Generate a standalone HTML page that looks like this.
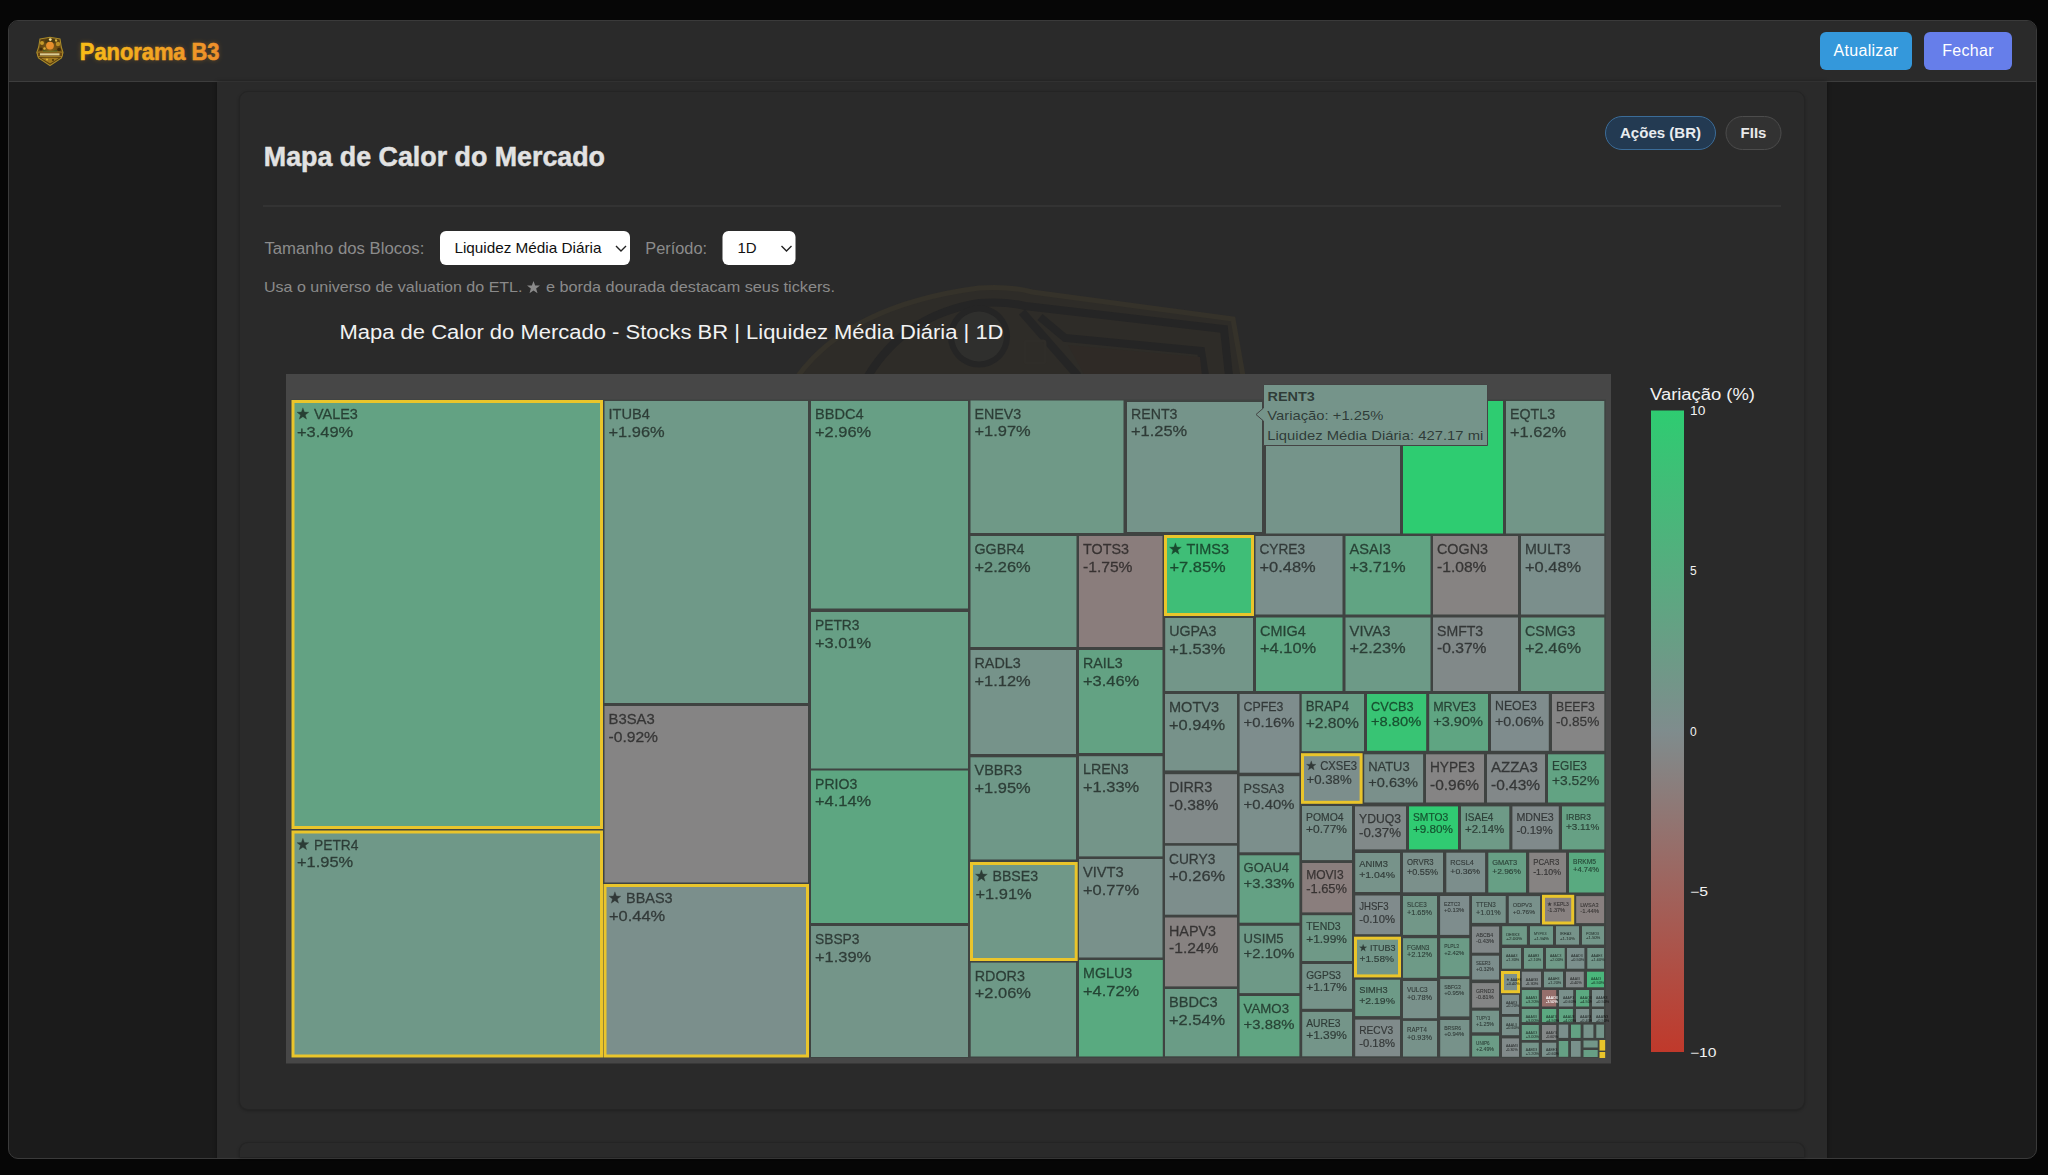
<!DOCTYPE html>
<html><head><meta charset="utf-8">
<style>
*{margin:0;padding:0;box-sizing:border-box}
html,body{width:2048px;height:1175px;overflow:hidden;background:#060606;font-family:"Liberation Sans",sans-serif}
.abs{position:absolute}
#win{position:absolute;left:8px;top:19.5px;width:2028.5px;height:1139px;border:1px solid #3a3a3a;border-radius:10px;overflow:hidden;background:#1b1b1b}
#hdr{position:absolute;left:0;top:0;right:0;height:61px;background:#2a2a2a;border-bottom:1px solid #3d3d3d}
#main{position:absolute;left:208px;top:61px;width:1610px;height:1100px;background:#2a2a2a;box-shadow:0 0 4px rgba(0,0,0,0.45)}
.card{position:absolute;background:#2a2a2a;border-radius:9px;border:1px solid #242424;box-shadow:0 1px 3px rgba(0,0,0,0.25)}
.btn{position:absolute;height:38px;border-radius:6px;color:#fff;font-size:16px;line-height:38px;text-align:center;letter-spacing:0.3px}
.pill{position:absolute;height:34px;border-radius:17px;font-weight:bold;font-size:15px;color:#e6e9ec;text-align:center;line-height:32px}
.sel{position:absolute;height:34px;background:#fff;border-radius:6px;border:1px solid #cfcfcf}
.lbl{position:absolute;color:#8b8b8b;font-size:16px;white-space:nowrap}
svg text{font-family:"Liberation Sans",sans-serif}
</style></head><body>
<div id="win">
 <div id="hdr"></div>
 <div id="main"></div>
</div>
<div class="card" style="left:238.5px;top:91px;width:1566px;height:1018.5px"></div>
<div class="card" style="left:238.5px;top:1142px;width:1566px;height:15px;border-radius:9px 9px 0 0;border-bottom:none"></div>
<svg class="abs" style="left:0;top:0" width="80" height="80" viewBox="0 0 80 80">
<defs><radialGradient id="lg1" cx="50" cy="50" r="14" gradientUnits="userSpaceOnUse"><stop offset="0" stop-color="#8c661a"/><stop offset="1" stop-color="#54390e"/></radialGradient></defs>
<path d="M40 39 L50 37.2 L60 39 L61.3 47 L63 52.5 L61.5 58 L50 65.5 L38.5 58 L36.8 52.5 L38.7 47 Z" fill="url(#lg1)" stroke="#a88a2a" stroke-width="1.1"/>
<circle cx="42" cy="43" r="2" fill="#c49a2a"/><circle cx="58" cy="44" r="2.2" fill="#b88c24"/><circle cx="44.5" cy="48.5" r="1.2" fill="#d4aa3a"/><circle cx="56" cy="40.5" r="1.2" fill="#d8b440"/><circle cx="39.5" cy="54" r="1.3" fill="#c9a030"/>
<circle cx="41" cy="49" r="1.6" fill="#3e2a0a"/><circle cx="59" cy="49.5" r="1.8" fill="#3e2a0a"/>
<ellipse cx="50" cy="41.2" rx="5.2" ry="2.6" fill="#4b3b12"/>
<circle cx="50" cy="45.6" r="3.9" fill="#e88f2c"/>
<circle cx="50.3" cy="39.6" r="1.4" fill="#f6e39a"/>
<path d="M43 50 Q50 52 57 50 L57 52 L43 52 Z" fill="#3f5a22" opacity="0.8"/>
<rect x="37.5" y="52" width="25" height="4.6" rx="1.2" fill="#6a4812" stroke="#c9a232" stroke-width="0.6"/>
<rect x="40" y="53.3" width="19.5" height="2.1" fill="#eadba2" opacity="0.9"/>
<path d="M41 58 L59 58 L50 63.5 Z" fill="#a27a1e"/>
<circle cx="47" cy="59.5" r="1" fill="#e0b840"/><circle cx="53" cy="60" r="0.9" fill="#3e2a0a"/>
</svg>
<svg class="abs" style="left:0;top:0" width="300" height="80">
 <defs>
  <linearGradient id="pg" x1="79" y1="0" x2="220" y2="0" gradientUnits="userSpaceOnUse"><stop offset="0" stop-color="#f7bd17"/><stop offset="1" stop-color="#ee8f2b"/></linearGradient>
  <filter id="glow" x="-20%" y="-50%" width="140%" height="200%"><feGaussianBlur stdDeviation="2.5"/></filter>
 </defs>
 <text x="79.8" y="59.9" font-size="23.5" font-weight="bold" fill="#e89a20" opacity="0.4" filter="url(#glow)" textLength="139.7" lengthAdjust="spacingAndGlyphs">Panorama B3</text>
 <text x="79.8" y="59.9" font-size="23.5" font-weight="bold" fill="url(#pg)" stroke="url(#pg)" stroke-width="0.6" textLength="139.7" lengthAdjust="spacingAndGlyphs">Panorama B3</text>
</svg>
<div class="btn" style="left:1820px;top:32px;width:92px;background:#3498db">Atualizar</div>
<div class="btn" style="left:1924px;top:32px;width:88px;background:#667eea">Fechar</div>

<svg class="abs" style="left:0;top:0" width="2048" height="1175">
 <text x="263.8" y="165.6" font-size="28" font-weight="bold" fill="#e2e2e2" stroke="#e2e2e2" stroke-width="0.5" textLength="341.2" lengthAdjust="spacingAndGlyphs">Mapa de Calor do Mercado</text>
 <rect x="1605.5" y="116.5" width="110" height="33" rx="16.5" fill="#233a52" stroke="#3b6c98" stroke-width="1"/>
 <text x="1660.5" y="138.2" font-size="15" font-weight="bold" fill="#e8ecef" text-anchor="middle" textLength="81" lengthAdjust="spacingAndGlyphs">Ações (BR)</text>
 <rect x="1726" y="116.5" width="55" height="33" rx="16.5" fill="#323232" stroke="#4c4c4c" stroke-width="1"/>
 <text x="1753.5" y="138.2" font-size="15" font-weight="bold" fill="#e8e8e8" text-anchor="middle">FIIs</text>
 <rect x="263" y="205.5" width="1518" height="1" fill="#3c3c3c"/>
 <text x="264.4" y="253.8" font-size="16" fill="#8c8c8c" textLength="160" lengthAdjust="spacingAndGlyphs">Tamanho dos Blocos:</text>
 <rect x="440" y="231" width="190" height="34" rx="6" fill="#ffffff"/>
 <text x="454.4" y="253.3" font-size="15" fill="#111" textLength="147" lengthAdjust="spacingAndGlyphs">Liquidez Média Diária</text>
 <path d="M616 246 L621 251 L626 246" fill="none" stroke="#222" stroke-width="1.4"/>
 <text x="645.3" y="253.8" font-size="16" fill="#8c8c8c" textLength="61.7" lengthAdjust="spacingAndGlyphs">Período:</text>
 <rect x="722.5" y="231" width="73" height="34" rx="6" fill="#ffffff"/>
 <text x="737.5" y="253.3" font-size="15" fill="#111">1D</text>
 <path d="M781.5 246 L786.5 251 L791.5 246" fill="none" stroke="#222" stroke-width="1.4"/>
 <text x="264" y="291.9" font-size="15" fill="#8a8a8a" textLength="258.5" lengthAdjust="spacingAndGlyphs">Usa o universo de valuation do ETL.</text>
 <path transform="translate(526.5,280.5)" d="M7.00,0.40 L8.65,4.93 L13.47,5.10 L9.66,8.07 L11.00,12.70 L7.00,10.00 L3.00,12.70 L4.34,8.07 L0.53,5.10 L5.35,4.93Z" fill="#8a8a8a"/>
 <text x="546" y="291.9" font-size="15" fill="#8a8a8a" textLength="289" lengthAdjust="spacingAndGlyphs">e borda dourada destacam seus tickers.</text>

 <!-- watermark -->
 <g>
  <path d="M798 376 Q 850 305 979 288 Q 1010 286 1032 292 L 1233 319 L 1243 376 Z" fill="#2e2c28"/>
  <path d="M798 376 Q 850 305 979 288 Q 1010 286 1032 292 L 1233 319 L 1243 376" fill="none" stroke="#35322a" stroke-width="5"/>
  <path d="M868 376 Q 905 315 979 303 Q 1005 301 1025 306 L 1224 329 L 1229 376" fill="none" stroke="#252525" stroke-width="8"/>
  <path d="M1040 317 L 1065 338 L 1201 351 L 1205 376" fill="none" stroke="#252525" stroke-width="8"/>
  <path d="M1022 312 L 1078 376" fill="none" stroke="#252525" stroke-width="8"/>
  <path d="M1068 345 L 1200 357 L 1202 376 L 1085 376 Z" fill="#2f2a26"/>
  <rect x="1025" y="341" width="20" height="22" rx="2" fill="none" stroke="#2f2d29" stroke-width="3"/>
  <circle cx="979" cy="336.5" r="31" fill="#252525"/>
  <circle cx="979" cy="336.5" r="25" fill="#2f2f2d"/>
 </g>

 <text x="339.5" y="339" font-size="20" fill="#f2f2f2" textLength="664" lengthAdjust="spacingAndGlyphs">Mapa de Calor do Mercado - Stocks BR | Liquidez Média Diária | 1D</text>

 <!-- treemap -->
 <rect x="286" y="374" width="1325" height="689.5" fill="#474747"/>
 <rect x="290.5" y="399.5" width="1315.5" height="658.5" fill="#3f4341"/>
 <rect x="291.5" y="400.0" width="311.5" height="429.0" fill="#eac52b"/>
<rect x="294.5" y="403.0" width="305.5" height="423.0" fill="#63a283"/>
<g fill="#000000" stroke="#000000" stroke-width="0.30" opacity="0.6" font-size="14.98">
<path d="M302.90,407.78 L304.43,411.98 L308.89,412.13 L305.37,414.88 L306.60,419.18 L302.90,416.68 L299.20,419.18 L300.43,414.88 L296.91,412.13 L301.37,411.98Z"/>
<text x="314.00" y="419.08" textLength="43.81" lengthAdjust="spacingAndGlyphs">VALE3</text>
<text x="297.00" y="436.56" textLength="56.20" lengthAdjust="spacingAndGlyphs">+3.49%</text>
</g>
<rect x="291.5" y="830.5" width="311.5" height="227.0" fill="#eac52b"/>
<rect x="294.5" y="833.5" width="305.5" height="221.0" fill="#6f9888"/>
<g fill="#000000" stroke="#000000" stroke-width="0.30" opacity="0.6" font-size="14.98">
<path d="M302.90,838.28 L304.43,842.48 L308.89,842.63 L305.37,845.38 L306.60,849.68 L302.90,847.18 L299.20,849.68 L300.43,845.38 L296.91,842.63 L301.37,842.48Z"/>
<text x="314.00" y="849.58" textLength="44.47" lengthAdjust="spacingAndGlyphs">PETR4</text>
<text x="297.00" y="867.06" textLength="56.20" lengthAdjust="spacingAndGlyphs">+1.95%</text>
</g>
<rect x="604.5" y="401.0" width="203.5" height="302.0" fill="#6f9988"/>
<g fill="#000000" stroke="#000000" stroke-width="0.30" opacity="0.6" font-size="14.98">
<text x="608.50" y="419.08" textLength="41.44" lengthAdjust="spacingAndGlyphs">ITUB4</text>
<text x="608.50" y="436.56" textLength="56.20" lengthAdjust="spacingAndGlyphs">+1.96%</text>
</g>
<rect x="604.5" y="706.0" width="203.5" height="176.5" fill="#858484"/>
<g fill="#000000" stroke="#000000" stroke-width="0.30" opacity="0.6" font-size="14.98">
<text x="608.50" y="724.08" textLength="46.16" lengthAdjust="spacingAndGlyphs">B3SA3</text>
<text x="608.50" y="741.56" textLength="49.52" lengthAdjust="spacingAndGlyphs">-0.92%</text>
</g>
<rect x="603.5" y="884.0" width="205.5" height="173.5" fill="#eac52b"/>
<rect x="606.5" y="887.0" width="199.5" height="167.5" fill="#7b8f8c"/>
<g fill="#000000" stroke="#000000" stroke-width="0.30" opacity="0.6" font-size="14.98">
<path d="M614.90,891.78 L616.43,895.98 L620.89,896.13 L617.37,898.88 L618.60,903.18 L614.90,900.68 L611.20,903.18 L612.43,898.88 L608.91,896.13 L613.37,895.98Z"/>
<text x="626.00" y="903.08" textLength="46.59" lengthAdjust="spacingAndGlyphs">BBAS3</text>
<text x="609.00" y="920.56" textLength="56.20" lengthAdjust="spacingAndGlyphs">+0.44%</text>
</g>
<rect x="811.0" y="401.0" width="157.0" height="207.5" fill="#679f85"/>
<g fill="#000000" stroke="#000000" stroke-width="0.30" opacity="0.6" font-size="14.98">
<text x="815.00" y="419.08" textLength="48.69" lengthAdjust="spacingAndGlyphs">BBDC4</text>
<text x="815.00" y="436.56" textLength="56.20" lengthAdjust="spacingAndGlyphs">+2.96%</text>
</g>
<rect x="811.0" y="612.0" width="157.0" height="156.5" fill="#679f85"/>
<g fill="#000000" stroke="#000000" stroke-width="0.30" opacity="0.6" font-size="14.98">
<text x="815.00" y="630.08" textLength="44.47" lengthAdjust="spacingAndGlyphs">PETR3</text>
<text x="815.00" y="647.56" textLength="56.20" lengthAdjust="spacingAndGlyphs">+3.01%</text>
</g>
<rect x="811.0" y="770.5" width="157.0" height="152.5" fill="#5da681"/>
<g fill="#000000" stroke="#000000" stroke-width="0.30" opacity="0.6" font-size="14.98">
<text x="815.00" y="788.58" textLength="42.22" lengthAdjust="spacingAndGlyphs">PRIO3</text>
<text x="815.00" y="806.06" textLength="56.20" lengthAdjust="spacingAndGlyphs">+4.14%</text>
</g>
<rect x="811.0" y="926.0" width="157.0" height="131.0" fill="#749589"/>
<g fill="#000000" stroke="#000000" stroke-width="0.30" opacity="0.6" font-size="14.98">
<text x="815.00" y="944.08" textLength="44.48" lengthAdjust="spacingAndGlyphs">SBSP3</text>
<text x="815.00" y="961.56" textLength="56.20" lengthAdjust="spacingAndGlyphs">+1.39%</text>
</g>
<rect x="970.5" y="400.5" width="153.0" height="132.5" fill="#6f9987"/>
<g fill="#000000" stroke="#000000" stroke-width="0.30" opacity="0.6" font-size="14.98">
<text x="974.50" y="418.58" textLength="46.64" lengthAdjust="spacingAndGlyphs">ENEV3</text>
<text x="974.50" y="436.06" textLength="56.20" lengthAdjust="spacingAndGlyphs">+1.97%</text>
</g>
<rect x="1127.0" y="402.0" width="135.0" height="130.0" fill="#75948a"/>
<g fill="#000000" stroke="#000000" stroke-width="0.30" opacity="0.6" font-size="14.98">
<text x="1131.00" y="418.88" textLength="46.50" lengthAdjust="spacingAndGlyphs">RENT3</text>
<text x="1131.00" y="436.36" textLength="56.20" lengthAdjust="spacingAndGlyphs">+1.25%</text>
</g>
<rect x="1266.0" y="401.0" width="134.0" height="132.5" fill="#75948a"/>
<rect x="1403.0" y="401.0" width="100.0" height="132.5" fill="#2ecc71"/>
<rect x="1506.0" y="401.0" width="98.3" height="132.5" fill="#729688"/>
<g fill="#000000" stroke="#000000" stroke-width="0.30" opacity="0.6" font-size="14.98">
<text x="1510.00" y="419.08" textLength="45.11" lengthAdjust="spacingAndGlyphs">EQTL3</text>
<text x="1510.00" y="436.56" textLength="56.20" lengthAdjust="spacingAndGlyphs">+1.62%</text>
</g>
<rect x="970.5" y="536.0" width="106.0" height="111.0" fill="#6d9a87"/>
<g fill="#000000" stroke="#000000" stroke-width="0.30" opacity="0.6" font-size="14.98">
<text x="974.50" y="554.08" textLength="49.94" lengthAdjust="spacingAndGlyphs">GGBR4</text>
<text x="974.50" y="571.56" textLength="56.20" lengthAdjust="spacingAndGlyphs">+2.26%</text>
</g>
<rect x="1079.0" y="536.0" width="83.5" height="111.0" fill="#8a7d7c"/>
<g fill="#000000" stroke="#000000" stroke-width="0.30" opacity="0.6" font-size="14.98">
<text x="1083.00" y="554.08" textLength="45.91" lengthAdjust="spacingAndGlyphs">TOTS3</text>
<text x="1083.00" y="571.56" textLength="49.52" lengthAdjust="spacingAndGlyphs">-1.75%</text>
</g>
<rect x="1164.0" y="535.0" width="90.0" height="81.0" fill="#eac52b"/>
<rect x="1167.0" y="538.0" width="84.0" height="75.0" fill="#3fbe77"/>
<g fill="#000000" stroke="#000000" stroke-width="0.30" opacity="0.6" font-size="14.98">
<path d="M1175.40,542.78 L1176.93,546.98 L1181.39,547.13 L1177.87,549.88 L1179.10,554.18 L1175.40,551.68 L1171.70,554.18 L1172.93,549.88 L1169.41,547.13 L1173.87,546.98Z"/>
<text x="1186.50" y="554.08" textLength="42.55" lengthAdjust="spacingAndGlyphs">TIMS3</text>
<text x="1169.50" y="571.56" textLength="56.20" lengthAdjust="spacingAndGlyphs">+7.85%</text>
</g>
<rect x="1255.5" y="536.0" width="87.0" height="78.5" fill="#7b8f8c"/>
<g fill="#000000" stroke="#000000" stroke-width="0.30" opacity="0.6" font-size="14.98">
<text x="1259.50" y="554.08" textLength="45.56" lengthAdjust="spacingAndGlyphs">CYRE3</text>
<text x="1259.50" y="571.56" textLength="56.20" lengthAdjust="spacingAndGlyphs">+0.48%</text>
</g>
<rect x="1345.5" y="536.0" width="85.0" height="78.5" fill="#61a483"/>
<g fill="#000000" stroke="#000000" stroke-width="0.30" opacity="0.6" font-size="14.98">
<text x="1349.50" y="554.08" textLength="41.34" lengthAdjust="spacingAndGlyphs">ASAI3</text>
<text x="1349.50" y="571.56" textLength="56.20" lengthAdjust="spacingAndGlyphs">+3.71%</text>
</g>
<rect x="1433.0" y="536.0" width="85.0" height="78.5" fill="#868382"/>
<g fill="#000000" stroke="#000000" stroke-width="0.30" opacity="0.6" font-size="14.98">
<text x="1437.00" y="554.08" textLength="51.02" lengthAdjust="spacingAndGlyphs">COGN3</text>
<text x="1437.00" y="571.56" textLength="49.52" lengthAdjust="spacingAndGlyphs">-1.08%</text>
</g>
<rect x="1521.0" y="536.0" width="83.3" height="78.5" fill="#7b8f8c"/>
<g fill="#000000" stroke="#000000" stroke-width="0.30" opacity="0.6" font-size="14.98">
<text x="1525.00" y="554.08" textLength="45.66" lengthAdjust="spacingAndGlyphs">MULT3</text>
<text x="1525.00" y="571.56" textLength="56.20" lengthAdjust="spacingAndGlyphs">+0.48%</text>
</g>
<rect x="970.5" y="650.0" width="105.5" height="104.0" fill="#76938a"/>
<g fill="#000000" stroke="#000000" stroke-width="0.30" opacity="0.6" font-size="14.98">
<text x="974.50" y="668.08" textLength="46.23" lengthAdjust="spacingAndGlyphs">RADL3</text>
<text x="974.50" y="685.56" textLength="56.20" lengthAdjust="spacingAndGlyphs">+1.12%</text>
</g>
<rect x="1079.0" y="650.0" width="83.5" height="103.0" fill="#63a283"/>
<g fill="#000000" stroke="#000000" stroke-width="0.30" opacity="0.6" font-size="14.98">
<text x="1083.00" y="668.08" textLength="39.58" lengthAdjust="spacingAndGlyphs">RAIL3</text>
<text x="1083.00" y="685.56" textLength="56.20" lengthAdjust="spacingAndGlyphs">+3.46%</text>
</g>
<rect x="970.5" y="757.3" width="105.5" height="102.2" fill="#6f9888"/>
<g fill="#000000" stroke="#000000" stroke-width="0.30" opacity="0.6" font-size="14.98">
<text x="974.50" y="775.38" textLength="47.44" lengthAdjust="spacingAndGlyphs">VBBR3</text>
<text x="974.50" y="792.86" textLength="56.20" lengthAdjust="spacingAndGlyphs">+1.95%</text>
</g>
<rect x="1079.0" y="756.2" width="83.5" height="100.2" fill="#749589"/>
<g fill="#000000" stroke="#000000" stroke-width="0.30" opacity="0.6" font-size="14.98">
<text x="1083.00" y="774.28" textLength="45.75" lengthAdjust="spacingAndGlyphs">LREN3</text>
<text x="1083.00" y="791.76" textLength="56.20" lengthAdjust="spacingAndGlyphs">+1.33%</text>
</g>
<rect x="970.0" y="862.0" width="107.7" height="99.0" fill="#eac52b"/>
<rect x="973.0" y="865.0" width="101.7" height="93.0" fill="#709888"/>
<g fill="#000000" stroke="#000000" stroke-width="0.30" opacity="0.6" font-size="14.98">
<path d="M981.40,869.78 L982.93,873.98 L987.39,874.13 L983.87,876.88 L985.10,881.18 L981.40,878.68 L977.70,881.18 L978.93,876.88 L975.41,874.13 L979.87,873.98Z"/>
<text x="992.50" y="881.08" textLength="45.61" lengthAdjust="spacingAndGlyphs">BBSE3</text>
<text x="975.50" y="898.56" textLength="56.20" lengthAdjust="spacingAndGlyphs">+1.91%</text>
</g>
<rect x="1079.0" y="859.0" width="83.5" height="98.5" fill="#79918b"/>
<g fill="#000000" stroke="#000000" stroke-width="0.30" opacity="0.6" font-size="14.98">
<text x="1083.00" y="877.08" textLength="40.73" lengthAdjust="spacingAndGlyphs">VIVT3</text>
<text x="1083.00" y="894.56" textLength="56.20" lengthAdjust="spacingAndGlyphs">+0.77%</text>
</g>
<rect x="970.7" y="962.6" width="105.3" height="93.9" fill="#6e9987"/>
<g fill="#000000" stroke="#000000" stroke-width="0.30" opacity="0.6" font-size="14.98">
<text x="974.70" y="980.68" textLength="50.17" lengthAdjust="spacingAndGlyphs">RDOR3</text>
<text x="974.70" y="998.16" textLength="56.20" lengthAdjust="spacingAndGlyphs">+2.06%</text>
</g>
<rect x="1079.0" y="960.0" width="83.8" height="96.5" fill="#59aa80"/>
<g fill="#000000" stroke="#000000" stroke-width="0.30" opacity="0.6" font-size="14.98">
<text x="1083.00" y="978.08" textLength="49.17" lengthAdjust="spacingAndGlyphs">MGLU3</text>
<text x="1083.00" y="995.56" textLength="56.20" lengthAdjust="spacingAndGlyphs">+4.72%</text>
</g>
<rect x="1165.2" y="618.0" width="87.8" height="73.0" fill="#739689"/>
<g fill="#000000" stroke="#000000" stroke-width="0.30" opacity="0.6" font-size="14.98">
<text x="1169.20" y="636.08" textLength="47.12" lengthAdjust="spacingAndGlyphs">UGPA3</text>
<text x="1169.20" y="653.56" textLength="56.20" lengthAdjust="spacingAndGlyphs">+1.53%</text>
</g>
<rect x="1256.0" y="617.5" width="86.5" height="73.5" fill="#5ea682"/>
<g fill="#000000" stroke="#000000" stroke-width="0.30" opacity="0.6" font-size="14.98">
<text x="1260.00" y="635.58" textLength="45.73" lengthAdjust="spacingAndGlyphs">CMIG4</text>
<text x="1260.00" y="653.06" textLength="56.20" lengthAdjust="spacingAndGlyphs">+4.10%</text>
</g>
<rect x="1345.5" y="617.5" width="85.0" height="73.5" fill="#6d9a87"/>
<g fill="#000000" stroke="#000000" stroke-width="0.30" opacity="0.6" font-size="14.98">
<text x="1349.50" y="635.58" textLength="40.88" lengthAdjust="spacingAndGlyphs">VIVA3</text>
<text x="1349.50" y="653.06" textLength="56.20" lengthAdjust="spacingAndGlyphs">+2.23%</text>
</g>
<rect x="1433.0" y="617.5" width="85.0" height="73.5" fill="#818989"/>
<g fill="#000000" stroke="#000000" stroke-width="0.30" opacity="0.6" font-size="14.98">
<text x="1437.00" y="635.58" textLength="46.22" lengthAdjust="spacingAndGlyphs">SMFT3</text>
<text x="1437.00" y="653.06" textLength="49.52" lengthAdjust="spacingAndGlyphs">-0.37%</text>
</g>
<rect x="1521.0" y="617.5" width="83.3" height="73.5" fill="#6b9c86"/>
<g fill="#000000" stroke="#000000" stroke-width="0.30" opacity="0.6" font-size="14.98">
<text x="1525.00" y="635.58" textLength="50.50" lengthAdjust="spacingAndGlyphs">CSMG3</text>
<text x="1525.00" y="653.06" textLength="56.20" lengthAdjust="spacingAndGlyphs">+2.46%</text>
</g>
<rect x="1165.0" y="694.0" width="72.0" height="76.4" fill="#77928a"/>
<g fill="#000000" stroke="#000000" stroke-width="0.30" opacity="0.6" font-size="14.98">
<text x="1169.00" y="712.08" textLength="50.12" lengthAdjust="spacingAndGlyphs">MOTV3</text>
<text x="1169.00" y="729.56" textLength="56.20" lengthAdjust="spacingAndGlyphs">+0.94%</text>
</g>
<rect x="1239.6" y="694.0" width="59.8" height="78.7" fill="#7e8d8d"/>
<g fill="#000000" stroke="#000000" stroke-width="0.27" opacity="0.6" font-size="13.54">
<text x="1243.60" y="710.91" textLength="39.78" lengthAdjust="spacingAndGlyphs">CPFE3</text>
<text x="1243.60" y="726.68" textLength="50.80" lengthAdjust="spacingAndGlyphs">+0.16%</text>
</g>
<rect x="1165.0" y="774.2" width="72.0" height="68.9" fill="#818989"/>
<g fill="#000000" stroke="#000000" stroke-width="0.30" opacity="0.6" font-size="14.98">
<text x="1169.00" y="792.28" textLength="43.28" lengthAdjust="spacingAndGlyphs">DIRR3</text>
<text x="1169.00" y="809.76" textLength="49.52" lengthAdjust="spacingAndGlyphs">-0.38%</text>
</g>
<rect x="1239.6" y="776.2" width="59.8" height="76.1" fill="#7c8f8c"/>
<g fill="#000000" stroke="#000000" stroke-width="0.27" opacity="0.6" font-size="13.54">
<text x="1243.60" y="793.11" textLength="40.65" lengthAdjust="spacingAndGlyphs">PSSA3</text>
<text x="1243.60" y="808.88" textLength="50.80" lengthAdjust="spacingAndGlyphs">+0.40%</text>
</g>
<rect x="1165.0" y="845.7" width="72.0" height="69.0" fill="#7d8e8c"/>
<g fill="#000000" stroke="#000000" stroke-width="0.30" opacity="0.6" font-size="14.98">
<text x="1169.00" y="863.78" textLength="46.33" lengthAdjust="spacingAndGlyphs">CURY3</text>
<text x="1169.00" y="881.26" textLength="56.20" lengthAdjust="spacingAndGlyphs">+0.26%</text>
</g>
<rect x="1165.0" y="917.5" width="72.0" height="68.9" fill="#878281"/>
<g fill="#000000" stroke="#000000" stroke-width="0.30" opacity="0.6" font-size="14.98">
<text x="1169.00" y="935.58" textLength="47.03" lengthAdjust="spacingAndGlyphs">HAPV3</text>
<text x="1169.00" y="953.06" textLength="49.52" lengthAdjust="spacingAndGlyphs">-1.24%</text>
</g>
<rect x="1165.0" y="989.0" width="72.0" height="67.3" fill="#6a9c86"/>
<g fill="#000000" stroke="#000000" stroke-width="0.30" opacity="0.6" font-size="14.98">
<text x="1169.00" y="1007.08" textLength="48.69" lengthAdjust="spacingAndGlyphs">BBDC3</text>
<text x="1169.00" y="1024.56" textLength="56.20" lengthAdjust="spacingAndGlyphs">+2.54%</text>
</g>
<rect x="1239.6" y="855.3" width="59.8" height="67.4" fill="#64a184"/>
<g fill="#000000" stroke="#000000" stroke-width="0.27" opacity="0.6" font-size="13.54">
<text x="1243.60" y="872.21" textLength="45.50" lengthAdjust="spacingAndGlyphs">GOAU4</text>
<text x="1243.60" y="887.98" textLength="50.80" lengthAdjust="spacingAndGlyphs">+3.33%</text>
</g>
<rect x="1239.6" y="925.8" width="59.8" height="67.3" fill="#6e9987"/>
<g fill="#000000" stroke="#000000" stroke-width="0.27" opacity="0.6" font-size="13.54">
<text x="1243.60" y="942.71" textLength="40.00" lengthAdjust="spacingAndGlyphs">USIM5</text>
<text x="1243.60" y="958.48" textLength="50.80" lengthAdjust="spacingAndGlyphs">+2.10%</text>
</g>
<rect x="1239.6" y="996.0" width="59.8" height="60.3" fill="#60a582"/>
<g fill="#000000" stroke="#000000" stroke-width="0.27" opacity="0.6" font-size="13.54">
<text x="1243.60" y="1012.91" textLength="45.43" lengthAdjust="spacingAndGlyphs">VAMO3</text>
<text x="1243.60" y="1028.68" textLength="50.80" lengthAdjust="spacingAndGlyphs">+3.88%</text>
</g>
<rect x="1301.7" y="694.0" width="62.3" height="57.2" fill="#689e85"/>
<g fill="#000000" stroke="#000000" stroke-width="0.28" opacity="0.6" font-size="14.21">
<text x="1305.70" y="711.45" textLength="43.34" lengthAdjust="spacingAndGlyphs">BRAP4</text>
<text x="1305.70" y="728.01" textLength="53.30" lengthAdjust="spacingAndGlyphs">+2.80%</text>
</g>
<rect x="1367.0" y="694.0" width="59.2" height="56.8" fill="#38c474"/>
<g fill="#000000" stroke="#000000" stroke-width="0.27" opacity="0.6" font-size="13.38">
<text x="1371.00" y="710.78" textLength="42.57" lengthAdjust="spacingAndGlyphs">CVCB3</text>
<text x="1371.00" y="726.36" textLength="50.20" lengthAdjust="spacingAndGlyphs">+8.80%</text>
</g>
<rect x="1429.2" y="694.0" width="58.8" height="56.8" fill="#5fa582"/>
<g fill="#000000" stroke="#000000" stroke-width="0.27" opacity="0.6" font-size="13.27">
<text x="1433.20" y="710.69" textLength="42.86" lengthAdjust="spacingAndGlyphs">MRVE3</text>
<text x="1433.20" y="726.15" textLength="49.80" lengthAdjust="spacingAndGlyphs">+3.90%</text>
</g>
<rect x="1491.0" y="694.0" width="57.8" height="56.8" fill="#7f8c8d"/>
<g fill="#000000" stroke="#000000" stroke-width="0.26" opacity="0.6" font-size="13.01">
<text x="1495.00" y="710.48" textLength="41.75" lengthAdjust="spacingAndGlyphs">NEOE3</text>
<text x="1495.00" y="725.61" textLength="48.80" lengthAdjust="spacingAndGlyphs">+0.06%</text>
</g>
<rect x="1552.0" y="694.0" width="52.3" height="56.8" fill="#858585"/>
<g fill="#000000" stroke="#000000" stroke-width="0.26" opacity="0.6" font-size="13.10">
<text x="1556.00" y="710.55" textLength="38.70" lengthAdjust="spacingAndGlyphs">BEEF3</text>
<text x="1556.00" y="725.80" textLength="43.30" lengthAdjust="spacingAndGlyphs">-0.85%</text>
</g>
<rect x="1301.0" y="753.2" width="61.6" height="50.6" fill="#eac52b"/>
<rect x="1304.0" y="756.2" width="55.6" height="44.6" fill="#7c8e8c"/>
<g fill="#000000" stroke="#000000" stroke-width="0.24" opacity="0.6" font-size="12.03">
<path d="M1311.24,760.81 L1312.46,764.18 L1316.05,764.30 L1313.22,766.51 L1314.21,769.96 L1311.24,767.95 L1308.26,769.96 L1309.25,766.51 L1306.43,764.30 L1310.01,764.18Z"/>
<text x="1320.15" y="769.88" textLength="36.95" lengthAdjust="spacingAndGlyphs">CXSE3</text>
<text x="1306.50" y="783.86" textLength="45.13" lengthAdjust="spacingAndGlyphs">+0.38%</text>
</g>
<rect x="1364.2" y="754.3" width="58.9" height="48.2" fill="#7a908b"/>
<g fill="#000000" stroke="#000000" stroke-width="0.27" opacity="0.6" font-size="13.30">
<text x="1368.20" y="771.01" textLength="41.42" lengthAdjust="spacingAndGlyphs">NATU3</text>
<text x="1368.20" y="786.50" textLength="49.90" lengthAdjust="spacingAndGlyphs">+0.63%</text>
</g>
<rect x="1426.0" y="754.3" width="58.0" height="48.2" fill="#858484"/>
<g fill="#000000" stroke="#000000" stroke-width="0.30" opacity="0.6" font-size="14.82">
<text x="1430.00" y="772.25" textLength="44.79" lengthAdjust="spacingAndGlyphs">HYPE3</text>
<text x="1430.00" y="789.55" textLength="49.00" lengthAdjust="spacingAndGlyphs">-0.96%</text>
</g>
<rect x="1487.0" y="754.3" width="58.0" height="48.2" fill="#828889"/>
<g fill="#000000" stroke="#000000" stroke-width="0.30" opacity="0.6" font-size="14.82">
<text x="1491.00" y="772.25" textLength="46.76" lengthAdjust="spacingAndGlyphs">AZZA3</text>
<text x="1491.00" y="789.55" textLength="49.00" lengthAdjust="spacingAndGlyphs">-0.43%</text>
</g>
<rect x="1548.0" y="754.3" width="56.3" height="48.2" fill="#62a383"/>
<g fill="#000000" stroke="#000000" stroke-width="0.25" opacity="0.6" font-size="12.61">
<text x="1552.00" y="770.45" textLength="34.98" lengthAdjust="spacingAndGlyphs">EGIE3</text>
<text x="1552.00" y="785.11" textLength="47.30" lengthAdjust="spacingAndGlyphs">+3.52%</text>
</g>
<rect x="1302.0" y="806.0" width="50.0" height="54.1" fill="#79918b"/>
<g fill="#000000" stroke="#000000" stroke-width="0.22" opacity="0.6" font-size="10.93">
<text x="1306.00" y="820.79" textLength="37.53" lengthAdjust="spacingAndGlyphs">POMO4</text>
<text x="1306.00" y="833.46" textLength="41.00" lengthAdjust="spacingAndGlyphs">+0.77%</text>
</g>
<rect x="1355.0" y="806.4" width="51.0" height="43.0" fill="#818989"/>
<g fill="#000000" stroke="#000000" stroke-width="0.25" opacity="0.6" font-size="12.71">
<text x="1359.00" y="822.63" textLength="41.99" lengthAdjust="spacingAndGlyphs">YDUQ3</text>
<text x="1359.00" y="837.41" textLength="42.00" lengthAdjust="spacingAndGlyphs">-0.37%</text>
</g>
<rect x="1409.0" y="806.4" width="49.0" height="43.0" fill="#30cb72"/>
<g fill="#000000" stroke="#000000" stroke-width="0.21" opacity="0.6" font-size="10.66">
<text x="1413.00" y="820.97" textLength="35.18" lengthAdjust="spacingAndGlyphs">SMTO3</text>
<text x="1413.00" y="833.32" textLength="40.00" lengthAdjust="spacingAndGlyphs">+9.80%</text>
</g>
<rect x="1461.0" y="806.4" width="48.3" height="43.0" fill="#6e9a87"/>
<g fill="#000000" stroke="#000000" stroke-width="0.21" opacity="0.6" font-size="10.47">
<text x="1465.00" y="820.82" textLength="28.40" lengthAdjust="spacingAndGlyphs">ISAE4</text>
<text x="1465.00" y="832.95" textLength="39.30" lengthAdjust="spacingAndGlyphs">+2.14%</text>
</g>
<rect x="1512.4" y="806.4" width="46.4" height="43.0" fill="#808a8b"/>
<g fill="#000000" stroke="#000000" stroke-width="0.22" opacity="0.6" font-size="10.97">
<text x="1516.40" y="821.22" textLength="37.40" lengthAdjust="spacingAndGlyphs">MDNE3</text>
<text x="1516.40" y="833.94" textLength="36.26" lengthAdjust="spacingAndGlyphs">-0.19%</text>
</g>
<rect x="1562.0" y="806.4" width="42.3" height="43.0" fill="#66a084"/>
<g fill="#000000" stroke="#000000" stroke-width="0.18" opacity="0.6" font-size="8.88">
<text x="1566.00" y="819.52" textLength="24.95" lengthAdjust="spacingAndGlyphs">IRBR3</text>
<text x="1566.00" y="829.75" textLength="33.30" lengthAdjust="spacingAndGlyphs">+3.11%</text>
</g>
<rect x="1302.2" y="863.0" width="49.8" height="49.4" fill="#8a7e7d"/>
<g fill="#000000" stroke="#000000" stroke-width="0.25" opacity="0.6" font-size="12.34">
<text x="1306.20" y="878.94" textLength="37.45" lengthAdjust="spacingAndGlyphs">MOVI3</text>
<text x="1306.20" y="893.29" textLength="40.80" lengthAdjust="spacingAndGlyphs">-1.65%</text>
</g>
<rect x="1302.2" y="915.2" width="49.8" height="45.8" fill="#6f9987"/>
<g fill="#000000" stroke="#000000" stroke-width="0.22" opacity="0.6" font-size="10.87">
<text x="1306.20" y="929.94" textLength="34.52" lengthAdjust="spacingAndGlyphs">TEND3</text>
<text x="1306.20" y="942.55" textLength="40.80" lengthAdjust="spacingAndGlyphs">+1.99%</text>
</g>
<rect x="1302.2" y="964.0" width="49.8" height="44.8" fill="#76938a"/>
<g fill="#000000" stroke="#000000" stroke-width="0.22" opacity="0.6" font-size="10.87">
<text x="1306.20" y="978.74" textLength="34.79" lengthAdjust="spacingAndGlyphs">GGPS3</text>
<text x="1306.20" y="991.35" textLength="40.80" lengthAdjust="spacingAndGlyphs">+1.17%</text>
</g>
<rect x="1302.2" y="1011.9" width="49.8" height="44.4" fill="#749589"/>
<g fill="#000000" stroke="#000000" stroke-width="0.22" opacity="0.6" font-size="10.87">
<text x="1306.20" y="1026.64" textLength="34.35" lengthAdjust="spacingAndGlyphs">AURE3</text>
<text x="1306.20" y="1039.25" textLength="40.80" lengthAdjust="spacingAndGlyphs">+1.39%</text>
</g>
<rect x="1355.2" y="853.0" width="44.8" height="39.0" fill="#77938a"/>
<g fill="#000000" stroke="#000000" stroke-width="0.19" opacity="0.6" font-size="9.54">
<text x="1359.20" y="866.66" textLength="28.76" lengthAdjust="spacingAndGlyphs">ANIM3</text>
<text x="1359.20" y="877.68" textLength="35.80" lengthAdjust="spacingAndGlyphs">+1.04%</text>
</g>
<rect x="1355.2" y="895.5" width="44.8" height="38.7" fill="#808b8c"/>
<g fill="#000000" stroke="#000000" stroke-width="0.22" opacity="0.6" font-size="10.83">
<text x="1359.20" y="910.21" textLength="29.28" lengthAdjust="spacingAndGlyphs">JHSF3</text>
<text x="1359.20" y="922.76" textLength="35.80" lengthAdjust="spacingAndGlyphs">-0.10%</text>
</g>
<rect x="1354.0" y="936.7" width="47.0" height="40.7" fill="#eac52b"/>
<rect x="1357.0" y="939.7" width="41.0" height="34.7" fill="#729689"/>
<g fill="#000000" stroke="#000000" stroke-width="0.18" opacity="0.6" font-size="9.23">
<path d="M1363.13,944.14 L1364.08,946.73 L1366.83,946.82 L1364.66,948.52 L1365.42,951.16 L1363.13,949.62 L1360.85,951.16 L1361.61,948.52 L1359.44,946.82 L1362.19,946.73Z"/>
<text x="1369.97" y="951.10" textLength="25.53" lengthAdjust="spacingAndGlyphs">ITUB3</text>
<text x="1359.50" y="961.76" textLength="34.62" lengthAdjust="spacingAndGlyphs">+1.58%</text>
</g>
<rect x="1355.2" y="979.7" width="44.8" height="36.4" fill="#6d9a87"/>
<g fill="#000000" stroke="#000000" stroke-width="0.19" opacity="0.6" font-size="9.54">
<text x="1359.20" y="993.36" textLength="28.37" lengthAdjust="spacingAndGlyphs">SIMH3</text>
<text x="1359.20" y="1004.38" textLength="35.80" lengthAdjust="spacingAndGlyphs">+2.19%</text>
</g>
<rect x="1355.2" y="1019.6" width="44.8" height="36.7" fill="#808b8b"/>
<g fill="#000000" stroke="#000000" stroke-width="0.22" opacity="0.6" font-size="10.83">
<text x="1359.20" y="1034.31" textLength="33.87" lengthAdjust="spacingAndGlyphs">RECV3</text>
<text x="1359.20" y="1046.86" textLength="35.80" lengthAdjust="spacingAndGlyphs">-0.18%</text>
</g>
<rect x="1403.0" y="852.7" width="40.0" height="39.6" fill="#7b908b"/>
<g fill="#000000" stroke="#000000" stroke-width="0.17" opacity="0.6" font-size="8.26">
<text x="1407.00" y="865.32" textLength="26.59" lengthAdjust="spacingAndGlyphs">ORVR3</text>
<text x="1407.00" y="874.83" textLength="31.00" lengthAdjust="spacingAndGlyphs">+0.55%</text>
</g>
<rect x="1446.3" y="852.7" width="38.8" height="39.6" fill="#7c8e8c"/>
<g fill="#000000" stroke="#000000" stroke-width="0.16" opacity="0.6" font-size="7.94">
<text x="1450.30" y="865.06" textLength="23.55" lengthAdjust="spacingAndGlyphs">RCSL4</text>
<text x="1450.30" y="874.19" textLength="29.80" lengthAdjust="spacingAndGlyphs">+0.36%</text>
</g>
<rect x="1488.3" y="852.7" width="37.7" height="39.8" fill="#679f85"/>
<g fill="#000000" stroke="#000000" stroke-width="0.15" opacity="0.6" font-size="7.65">
<text x="1492.30" y="864.82" textLength="24.95" lengthAdjust="spacingAndGlyphs">GMAT3</text>
<text x="1492.30" y="873.60" textLength="28.70" lengthAdjust="spacingAndGlyphs">+2.96%</text>
</g>
<rect x="1529.2" y="852.7" width="36.8" height="39.8" fill="#868382"/>
<g fill="#000000" stroke="#000000" stroke-width="0.17" opacity="0.6" font-size="8.41">
<text x="1533.20" y="865.44" textLength="26.07" lengthAdjust="spacingAndGlyphs">PCAR3</text>
<text x="1533.20" y="875.12" textLength="27.80" lengthAdjust="spacingAndGlyphs">-1.10%</text>
</g>
<rect x="1569.0" y="852.7" width="35.1" height="39.8" fill="#59aa80"/>
<g fill="#000000" stroke="#000000" stroke-width="0.14" opacity="0.6" font-size="6.96">
<text x="1573.00" y="864.26" textLength="22.99" lengthAdjust="spacingAndGlyphs">BRKM5</text>
<text x="1573.00" y="872.21" textLength="26.10" lengthAdjust="spacingAndGlyphs">+4.74%</text>
</g>
<rect x="1403.0" y="896.0" width="34.0" height="38.9" fill="#729788"/>
<g fill="#000000" stroke="#000000" stroke-width="0.13" opacity="0.6" font-size="6.66">
<text x="1407.00" y="907.32" textLength="19.67" lengthAdjust="spacingAndGlyphs">SLCE3</text>
<text x="1407.00" y="914.93" textLength="25.00" lengthAdjust="spacingAndGlyphs">+1.65%</text>
</g>
<rect x="1440.1" y="896.0" width="29.1" height="38.9" fill="#7e8d8d"/>
<g fill="#000000" stroke="#000000" stroke-width="0.11" opacity="0.6" font-size="5.36">
<text x="1444.10" y="906.26" textLength="16.04" lengthAdjust="spacingAndGlyphs">EZTC3</text>
<text x="1444.10" y="912.31" textLength="20.10" lengthAdjust="spacingAndGlyphs">+0.13%</text>
</g>
<rect x="1472.0" y="896.0" width="33.7" height="26.9" fill="#77928a"/>
<g fill="#000000" stroke="#000000" stroke-width="0.13" opacity="0.6" font-size="6.58">
<text x="1476.00" y="907.25" textLength="19.80" lengthAdjust="spacingAndGlyphs">TTEN3</text>
<text x="1476.00" y="914.77" textLength="24.70" lengthAdjust="spacingAndGlyphs">+1.01%</text>
</g>
<rect x="1508.8" y="896.1" width="31.2" height="27.0" fill="#79918b"/>
<g fill="#000000" stroke="#000000" stroke-width="0.12" opacity="0.6" font-size="5.92">
<text x="1512.80" y="906.81" textLength="19.24" lengthAdjust="spacingAndGlyphs">ODPV3</text>
<text x="1512.80" y="913.53" textLength="22.20" lengthAdjust="spacingAndGlyphs">+0.76%</text>
</g>
<rect x="1542.0" y="894.8" width="32.2" height="29.7" fill="#eac52b"/>
<rect x="1545.0" y="897.8" width="26.2" height="23.7" fill="#888180"/>
<g fill="#000000" stroke="#000000" stroke-width="0.11" opacity="0.6" font-size="5.28">
<path d="M1549.58,902.01 L1550.12,903.49 L1551.69,903.54 L1550.45,904.51 L1550.88,906.03 L1549.58,905.15 L1548.27,906.03 L1548.71,904.51 L1547.47,903.54 L1549.04,903.49Z"/>
<text x="1553.49" y="905.99" textLength="15.21" lengthAdjust="spacingAndGlyphs">KEPL3</text>
<text x="1547.50" y="911.96" textLength="17.45" lengthAdjust="spacingAndGlyphs">-1.37%</text>
</g>
<rect x="1576.2" y="896.1" width="27.9" height="27.0" fill="#88807f"/>
<g fill="#000000" stroke="#000000" stroke-width="0.11" opacity="0.6" font-size="5.72">
<text x="1580.20" y="906.65" textLength="18.32" lengthAdjust="spacingAndGlyphs">LWSA3</text>
<text x="1580.20" y="913.14" textLength="18.90" lengthAdjust="spacingAndGlyphs">-1.44%</text>
</g>
<rect x="1472.0" y="926.5" width="27.1" height="26.2" fill="#828889"/>
<g fill="#000000" stroke="#000000" stroke-width="0.11" opacity="0.6" font-size="5.48">
<text x="1476.00" y="936.85" textLength="17.27" lengthAdjust="spacingAndGlyphs">ABCB4</text>
<text x="1476.00" y="943.05" textLength="18.10" lengthAdjust="spacingAndGlyphs">-0.43%</text>
</g>
<rect x="1502.2" y="926.2" width="24.7" height="18.4" fill="#6f9987"/>
<g fill="#000000" stroke="#000000" stroke-width="0.09" opacity="0.6" font-size="4.28">
<text x="1506.20" y="935.58" textLength="13.31" lengthAdjust="spacingAndGlyphs">DESK3</text>
<text x="1506.20" y="940.36" textLength="16.06" lengthAdjust="spacingAndGlyphs">+2.00%</text>
</g>
<rect x="1530.0" y="926.2" width="23.0" height="18.4" fill="#6f9888"/>
<g fill="#000000" stroke="#000000" stroke-width="0.08" opacity="0.6" font-size="3.98">
<text x="1534.00" y="935.34" textLength="12.54" lengthAdjust="spacingAndGlyphs">MYPK3</text>
<text x="1534.00" y="939.77" textLength="14.95" lengthAdjust="spacingAndGlyphs">+1.94%</text>
</g>
<rect x="1556.0" y="926.2" width="23.0" height="18.4" fill="#76938a"/>
<g fill="#000000" stroke="#000000" stroke-width="0.08" opacity="0.6" font-size="3.98">
<text x="1560.00" y="935.34" textLength="11.40" lengthAdjust="spacingAndGlyphs">IRHA3</text>
<text x="1560.00" y="939.77" textLength="14.95" lengthAdjust="spacingAndGlyphs">+1.10%</text>
</g>
<rect x="1582.0" y="926.2" width="22.0" height="18.4" fill="#739689"/>
<g fill="#000000" stroke="#000000" stroke-width="0.08" opacity="0.6" font-size="3.81">
<text x="1586.00" y="935.20" textLength="13.09" lengthAdjust="spacingAndGlyphs">POMO3</text>
<text x="1586.00" y="939.42" textLength="14.30" lengthAdjust="spacingAndGlyphs">+1.50%</text>
</g>
<rect x="1403.0" y="938.2" width="34.0" height="39.6" fill="#6e9a87"/>
<g fill="#000000" stroke="#000000" stroke-width="0.13" opacity="0.6" font-size="6.66">
<text x="1407.00" y="949.52" textLength="22.39" lengthAdjust="spacingAndGlyphs">FGMN3</text>
<text x="1407.00" y="957.13" textLength="25.00" lengthAdjust="spacingAndGlyphs">+2.12%</text>
</g>
<rect x="1440.2" y="938.2" width="29.1" height="38.0" fill="#6b9b86"/>
<g fill="#000000" stroke="#000000" stroke-width="0.11" opacity="0.6" font-size="5.36">
<text x="1444.20" y="948.46" textLength="14.80" lengthAdjust="spacingAndGlyphs">PLPL3</text>
<text x="1444.20" y="954.51" textLength="20.10" lengthAdjust="spacingAndGlyphs">+2.42%</text>
</g>
<rect x="1403.0" y="981.0" width="34.0" height="37.2" fill="#79918b"/>
<g fill="#000000" stroke="#000000" stroke-width="0.13" opacity="0.6" font-size="6.66">
<text x="1407.00" y="992.32" textLength="20.60" lengthAdjust="spacingAndGlyphs">VULC3</text>
<text x="1407.00" y="999.93" textLength="25.00" lengthAdjust="spacingAndGlyphs">+0.78%</text>
</g>
<rect x="1440.2" y="979.1" width="29.1" height="37.3" fill="#77928a"/>
<g fill="#000000" stroke="#000000" stroke-width="0.11" opacity="0.6" font-size="5.36">
<text x="1444.20" y="989.36" textLength="16.56" lengthAdjust="spacingAndGlyphs">SBFG3</text>
<text x="1444.20" y="995.41" textLength="20.10" lengthAdjust="spacingAndGlyphs">+0.95%</text>
</g>
<rect x="1403.0" y="1020.9" width="34.0" height="35.6" fill="#77928a"/>
<g fill="#000000" stroke="#000000" stroke-width="0.13" opacity="0.6" font-size="6.66">
<text x="1407.00" y="1032.22" textLength="19.86" lengthAdjust="spacingAndGlyphs">RAPT4</text>
<text x="1407.00" y="1039.83" textLength="25.00" lengthAdjust="spacingAndGlyphs">+0.93%</text>
</g>
<rect x="1440.2" y="1020.0" width="29.1" height="36.5" fill="#77928a"/>
<g fill="#000000" stroke="#000000" stroke-width="0.11" opacity="0.6" font-size="5.36">
<text x="1444.20" y="1030.26" textLength="16.76" lengthAdjust="spacingAndGlyphs">BRSR6</text>
<text x="1444.20" y="1036.31" textLength="20.10" lengthAdjust="spacingAndGlyphs">+0.94%</text>
</g>
<rect x="1472.1" y="955.7" width="26.9" height="23.9" fill="#7c8e8c"/>
<g fill="#000000" stroke="#000000" stroke-width="0.10" opacity="0.6" font-size="4.77">
<text x="1476.10" y="965.48" textLength="14.40" lengthAdjust="spacingAndGlyphs">SEER3</text>
<text x="1476.10" y="970.84" textLength="17.90" lengthAdjust="spacingAndGlyphs">+0.32%</text>
</g>
<rect x="1472.1" y="983.1" width="26.9" height="24.5" fill="#848585"/>
<g fill="#000000" stroke="#000000" stroke-width="0.11" opacity="0.6" font-size="5.29">
<text x="1476.10" y="993.30" textLength="17.90" lengthAdjust="spacingAndGlyphs">GRND3</text>
<text x="1476.10" y="999.27" textLength="17.47" lengthAdjust="spacingAndGlyphs">-0.81%</text>
</g>
<rect x="1472.1" y="1010.7" width="26.9" height="21.6" fill="#75948a"/>
<g fill="#000000" stroke="#000000" stroke-width="0.10" opacity="0.6" font-size="4.77">
<text x="1476.10" y="1020.48" textLength="14.13" lengthAdjust="spacingAndGlyphs">TUPY3</text>
<text x="1476.10" y="1025.84" textLength="17.90" lengthAdjust="spacingAndGlyphs">+1.25%</text>
</g>
<rect x="1472.1" y="1035.7" width="26.9" height="20.8" fill="#6b9c86"/>
<g fill="#000000" stroke="#000000" stroke-width="0.10" opacity="0.6" font-size="4.77">
<text x="1476.10" y="1045.48" textLength="13.44" lengthAdjust="spacingAndGlyphs">UNIP6</text>
<text x="1476.10" y="1050.84" textLength="17.90" lengthAdjust="spacingAndGlyphs">+2.49%</text>
</g>
<rect x="1502.0" y="948.0" width="19.0" height="20.7" fill="#749489"/>
<g fill="#000000" stroke="#000000" stroke-width="0.07" opacity="0.6" font-size="3.53">
<text x="1506.00" y="956.77" textLength="11.41" lengthAdjust="spacingAndGlyphs">AAAA3</text>
<text x="1506.00" y="960.66" textLength="13.25" lengthAdjust="spacingAndGlyphs">+1.30%</text>
</g>
<rect x="1524.0" y="948.0" width="19.0" height="20.7" fill="#6e9987"/>
<g fill="#000000" stroke="#000000" stroke-width="0.07" opacity="0.6" font-size="3.53">
<text x="1528.00" y="956.77" textLength="11.32" lengthAdjust="spacingAndGlyphs">AAAB3</text>
<text x="1528.00" y="960.66" textLength="13.25" lengthAdjust="spacingAndGlyphs">+2.10%</text>
</g>
<rect x="1546.0" y="948.0" width="18.7" height="20.7" fill="#6f9987"/>
<g fill="#000000" stroke="#000000" stroke-width="0.07" opacity="0.6" font-size="3.53">
<text x="1550.00" y="956.77" textLength="11.30" lengthAdjust="spacingAndGlyphs">AAAC3</text>
<text x="1550.00" y="960.66" textLength="13.25" lengthAdjust="spacingAndGlyphs">+2.00%</text>
</g>
<rect x="1567.0" y="948.0" width="17.4" height="20.7" fill="#7b8f8c"/>
<g fill="#000000" stroke="#000000" stroke-width="0.07" opacity="0.6" font-size="3.53">
<text x="1571.00" y="956.77" textLength="11.60" lengthAdjust="spacingAndGlyphs">AAAD3</text>
<text x="1571.00" y="960.66" textLength="13.25" lengthAdjust="spacingAndGlyphs">+0.50%</text>
</g>
<rect x="1587.3" y="948.0" width="16.7" height="20.7" fill="#729689"/>
<g fill="#000000" stroke="#000000" stroke-width="0.07" opacity="0.6" font-size="3.53">
<text x="1591.30" y="956.77" textLength="11.14" lengthAdjust="spacingAndGlyphs">AAAE3</text>
<text x="1591.30" y="960.66" textLength="13.25" lengthAdjust="spacingAndGlyphs">+1.60%</text>
</g>
<rect x="1501.0" y="971.0" width="19.0" height="22.2" fill="#eac52b"/>
<rect x="1504.0" y="974.0" width="13.0" height="16.2" fill="#7c8f8c"/>
<g fill="#000000" stroke="#000000" stroke-width="0.07" opacity="0.6" font-size="3.53">
<path d="M1507.89,978.11 L1508.25,979.10 L1509.30,979.13 L1508.47,979.78 L1508.76,980.79 L1507.89,980.21 L1507.02,980.79 L1507.31,979.78 L1506.48,979.13 L1507.53,979.10Z"/>
<text x="1510.51" y="980.77" textLength="10.95" lengthAdjust="spacingAndGlyphs">AAAF3</text>
<text x="1506.50" y="984.66" textLength="13.25" lengthAdjust="spacingAndGlyphs">+0.40%</text>
</g>
<rect x="1521.8" y="971.7" width="19.2" height="15.6" fill="#818a8a"/>
<g fill="#000000" stroke="#000000" stroke-width="0.08" opacity="0.6" font-size="3.78">
<text x="1525.80" y="980.67" textLength="12.35" lengthAdjust="spacingAndGlyphs">AAAG3</text>
<text x="1525.80" y="984.85" textLength="12.48" lengthAdjust="spacingAndGlyphs">-0.30%</text>
</g>
<rect x="1544.0" y="971.7" width="19.0" height="15.6" fill="#75948a"/>
<g fill="#000000" stroke="#000000" stroke-width="0.07" opacity="0.6" font-size="3.53">
<text x="1548.00" y="980.47" textLength="11.54" lengthAdjust="spacingAndGlyphs">AAAH3</text>
<text x="1548.00" y="984.36" textLength="13.25" lengthAdjust="spacingAndGlyphs">+1.20%</text>
</g>
<rect x="1566.0" y="971.7" width="17.8" height="15.6" fill="#828989"/>
<g fill="#000000" stroke="#000000" stroke-width="0.07" opacity="0.6" font-size="3.53">
<text x="1570.00" y="980.47" textLength="10.03" lengthAdjust="spacingAndGlyphs">AAAI3</text>
<text x="1570.00" y="984.36" textLength="11.67" lengthAdjust="spacingAndGlyphs">-0.40%</text>
</g>
<rect x="1587.0" y="971.7" width="17.0" height="15.6" fill="#4ab67b"/>
<g fill="#000000" stroke="#000000" stroke-width="0.07" opacity="0.6" font-size="3.53">
<text x="1591.00" y="980.47" textLength="10.03" lengthAdjust="spacingAndGlyphs">AAAJ3</text>
<text x="1591.00" y="984.36" textLength="13.25" lengthAdjust="spacingAndGlyphs">+6.50%</text>
</g>
<rect x="1502.0" y="994.8" width="17.0" height="19.2" fill="#7d8d8c"/>
<g fill="#000000" stroke="#000000" stroke-width="0.07" opacity="0.6" font-size="3.53">
<text x="1506.00" y="1003.57" textLength="11.22" lengthAdjust="spacingAndGlyphs">AAAK3</text>
<text x="1506.00" y="1007.46" textLength="13.25" lengthAdjust="spacingAndGlyphs">+0.20%</text>
</g>
<rect x="1502.0" y="1016.8" width="17.0" height="18.4" fill="#7a908b"/>
<g fill="#000000" stroke="#000000" stroke-width="0.07" opacity="0.6" font-size="3.53">
<text x="1506.00" y="1025.57" textLength="10.89" lengthAdjust="spacingAndGlyphs">AAAL3</text>
<text x="1506.00" y="1029.46" textLength="13.25" lengthAdjust="spacingAndGlyphs">+0.60%</text>
</g>
<rect x="1502.0" y="1038.4" width="17.0" height="18.4" fill="#818a8a"/>
<g fill="#000000" stroke="#000000" stroke-width="0.07" opacity="0.6" font-size="3.53">
<text x="1506.00" y="1047.17" textLength="11.90" lengthAdjust="spacingAndGlyphs">AAAM3</text>
<text x="1506.00" y="1051.06" textLength="11.67" lengthAdjust="spacingAndGlyphs">-0.30%</text>
</g>
<rect x="1521.8" y="990.0" width="17.0" height="16.5" fill="#65a084"/>
<g fill="#000000" stroke="#000000" stroke-width="0.07" opacity="0.6" font-size="3.53">
<text x="1525.80" y="998.77" textLength="11.52" lengthAdjust="spacingAndGlyphs">AAAN3</text>
<text x="1525.80" y="1002.66" textLength="13.25" lengthAdjust="spacingAndGlyphs">+3.20%</text>
</g>
<rect x="1542.0" y="990.0" width="14.2" height="16.5" fill="#966f6b"/>
<g fill="#ffffff" stroke="#ffffff" stroke-width="0.07" opacity="0.95" font-size="3.53">
<text x="1546.00" y="998.77" textLength="11.59" lengthAdjust="spacingAndGlyphs">AAAO3</text>
<text x="1546.00" y="1002.66" textLength="11.67" lengthAdjust="spacingAndGlyphs">-3.50%</text>
</g>
<rect x="1559.0" y="990.0" width="14.2" height="16.5" fill="#7a908b"/>
<g fill="#000000" stroke="#000000" stroke-width="0.07" opacity="0.6" font-size="3.53">
<text x="1563.00" y="998.77" textLength="11.05" lengthAdjust="spacingAndGlyphs">AAAP3</text>
<text x="1563.00" y="1002.66" textLength="13.25" lengthAdjust="spacingAndGlyphs">+0.60%</text>
</g>
<rect x="1576.0" y="990.0" width="13.1" height="16.5" fill="#5ba980"/>
<g fill="#000000" stroke="#000000" stroke-width="0.07" opacity="0.6" font-size="3.53">
<text x="1580.00" y="998.77" textLength="11.59" lengthAdjust="spacingAndGlyphs">AAAQ3</text>
<text x="1580.00" y="1002.66" textLength="13.25" lengthAdjust="spacingAndGlyphs">+4.50%</text>
</g>
<rect x="1592.0" y="990.0" width="12.0" height="16.5" fill="#7b8f8c"/>
<g fill="#000000" stroke="#000000" stroke-width="0.07" opacity="0.6" font-size="3.53">
<text x="1596.00" y="998.77" textLength="11.35" lengthAdjust="spacingAndGlyphs">AAAR3</text>
<text x="1596.00" y="1002.66" textLength="13.25" lengthAdjust="spacingAndGlyphs">+0.50%</text>
</g>
<rect x="1521.8" y="1009.0" width="17.0" height="13.1" fill="#679f85"/>
<g fill="#000000" stroke="#000000" stroke-width="0.07" opacity="0.6" font-size="3.53">
<text x="1525.80" y="1017.77" textLength="11.15" lengthAdjust="spacingAndGlyphs">AAAS3</text>
<text x="1525.80" y="1021.66" textLength="13.25" lengthAdjust="spacingAndGlyphs">+3.00%</text>
</g>
<rect x="1542.0" y="1009.0" width="14.2" height="13.1" fill="#5ba980"/>
<g fill="#000000" stroke="#000000" stroke-width="0.07" opacity="0.6" font-size="3.53">
<text x="1546.00" y="1017.77" textLength="10.81" lengthAdjust="spacingAndGlyphs">AAAT3</text>
<text x="1546.00" y="1021.66" textLength="13.25" lengthAdjust="spacingAndGlyphs">+4.50%</text>
</g>
<rect x="1559.0" y="1009.0" width="13.9" height="13.1" fill="#5fa682"/>
<g fill="#000000" stroke="#000000" stroke-width="0.07" opacity="0.6" font-size="3.53">
<text x="1563.00" y="1017.77" textLength="11.47" lengthAdjust="spacingAndGlyphs">AAAU3</text>
<text x="1563.00" y="1021.66" textLength="13.25" lengthAdjust="spacingAndGlyphs">+4.00%</text>
</g>
<rect x="1576.0" y="1009.0" width="13.1" height="13.1" fill="#7c8f8c"/>
<g fill="#000000" stroke="#000000" stroke-width="0.07" opacity="0.6" font-size="3.53">
<text x="1580.00" y="1017.77" textLength="11.10" lengthAdjust="spacingAndGlyphs">AAAV3</text>
<text x="1580.00" y="1021.66" textLength="13.25" lengthAdjust="spacingAndGlyphs">+0.40%</text>
</g>
<rect x="1592.0" y="1009.0" width="12.0" height="13.1" fill="#7b8f8c"/>
<g fill="#000000" stroke="#000000" stroke-width="0.07" opacity="0.6" font-size="3.53">
<text x="1596.00" y="1017.77" textLength="12.14" lengthAdjust="spacingAndGlyphs">AAAW3</text>
<text x="1596.00" y="1021.66" textLength="13.25" lengthAdjust="spacingAndGlyphs">+0.50%</text>
</g>
<rect x="1521.8" y="1025.0" width="17.0" height="15.0" fill="#679f85"/>
<g fill="#000000" stroke="#000000" stroke-width="0.07" opacity="0.6" font-size="3.53">
<text x="1525.80" y="1033.77" textLength="11.32" lengthAdjust="spacingAndGlyphs">AAAX3</text>
<text x="1525.80" y="1037.66" textLength="13.25" lengthAdjust="spacingAndGlyphs">+3.00%</text>
</g>
<rect x="1542.0" y="1025.0" width="14.2" height="15.0" fill="#838787"/>
<g fill="#000000" stroke="#000000" stroke-width="0.07" opacity="0.6" font-size="3.53">
<text x="1546.00" y="1033.77" textLength="10.81" lengthAdjust="spacingAndGlyphs">AAAY3</text>
<text x="1546.00" y="1037.66" textLength="11.67" lengthAdjust="spacingAndGlyphs">-0.60%</text>
</g>
<rect x="1558.8" y="1024.6" width="9.4" height="13.3" fill="#7b8f8c"/>
<rect x="1571.0" y="1024.6" width="9.6" height="13.3" fill="#63a283"/>
<rect x="1583.5" y="1024.6" width="9.9" height="13.3" fill="#77928a"/>
<rect x="1596.3" y="1024.6" width="7.7" height="13.3" fill="#749489"/>
<rect x="1521.8" y="1042.7" width="17.0" height="14.1" fill="#75948a"/>
<g fill="#000000" stroke="#000000" stroke-width="0.07" opacity="0.6" font-size="3.53">
<text x="1525.80" y="1051.47" textLength="11.51" lengthAdjust="spacingAndGlyphs">AABD3</text>
<text x="1525.80" y="1055.36" textLength="13.25" lengthAdjust="spacingAndGlyphs">+1.20%</text>
</g>
<rect x="1542.0" y="1042.7" width="14.2" height="14.1" fill="#7a908b"/>
<g fill="#000000" stroke="#000000" stroke-width="0.07" opacity="0.6" font-size="3.53">
<text x="1546.00" y="1051.47" textLength="11.06" lengthAdjust="spacingAndGlyphs">AABE3</text>
<text x="1546.00" y="1055.36" textLength="13.25" lengthAdjust="spacingAndGlyphs">+0.60%</text>
</g>
<rect x="1558.8" y="1041.0" width="9.4" height="15.8" fill="#65a084"/>
<rect x="1571.0" y="1041.0" width="9.6" height="15.8" fill="#79918b"/>
<rect x="1583.5" y="1040.5" width="14.2" height="7.0" fill="#739689"/>
<rect x="1583.5" y="1050.0" width="14.2" height="7.0" fill="#679f85"/>
<rect x="1599.5" y="1040.0" width="5.7" height="10.6" fill="#eac52b"/>
<rect x="1599.5" y="1052.0" width="5.7" height="6.0" fill="#eac52b"/>

 <!-- tooltip -->
 <path d="M1263.5 384.5 L1487.5 384.5 L1487.5 445.5 L1263.5 445.5 L1263.5 421 L1256 414.5 L1263.5 408 Z" fill="#75948a" stroke="#444" stroke-width="1"/>
 <text x="1267.5" y="400.5" font-size="13.6" font-weight="bold" fill="#000" fill-opacity="0.62" textLength="47.4" lengthAdjust="spacingAndGlyphs">RENT3</text>
 <text x="1267.3" y="419.8" font-size="13.6" fill="#000" fill-opacity="0.62" textLength="116" lengthAdjust="spacingAndGlyphs">Variação: +1.25%</text>
 <text x="1267.3" y="439.8" font-size="13.6" fill="#000" fill-opacity="0.62" textLength="216" lengthAdjust="spacingAndGlyphs">Liquidez Média Diária: 427.17 mi</text>

 <!-- colorbar -->
 <defs>
  <linearGradient id="cb" x1="0" y1="0" x2="0" y2="1">
   <stop offset="0" stop-color="#2ecc71"/><stop offset="0.5" stop-color="#7f8c8d"/><stop offset="1" stop-color="#c0392b"/>
  </linearGradient>
 </defs>
 <text x="1650" y="399.9" font-size="16" fill="#f2f2f2" textLength="105" lengthAdjust="spacingAndGlyphs">Variação (%)</text>
 <rect x="1651" y="410.5" width="33" height="641.5" fill="url(#cb)"/>
 <text x="1690" y="415" font-size="12" fill="#f2f2f2" textLength="15.3" lengthAdjust="spacingAndGlyphs">10</text>
 <text x="1690" y="575.4" font-size="12" fill="#f2f2f2">5</text>
 <text x="1690" y="735.7" font-size="12" fill="#f2f2f2">0</text>
 <text x="1690" y="896" font-size="12" fill="#f2f2f2" textLength="18" lengthAdjust="spacingAndGlyphs">−5</text>
 <text x="1690" y="1056.5" font-size="12" fill="#f2f2f2" textLength="26.5" lengthAdjust="spacingAndGlyphs">−10</text>
</svg>
</body></html>
